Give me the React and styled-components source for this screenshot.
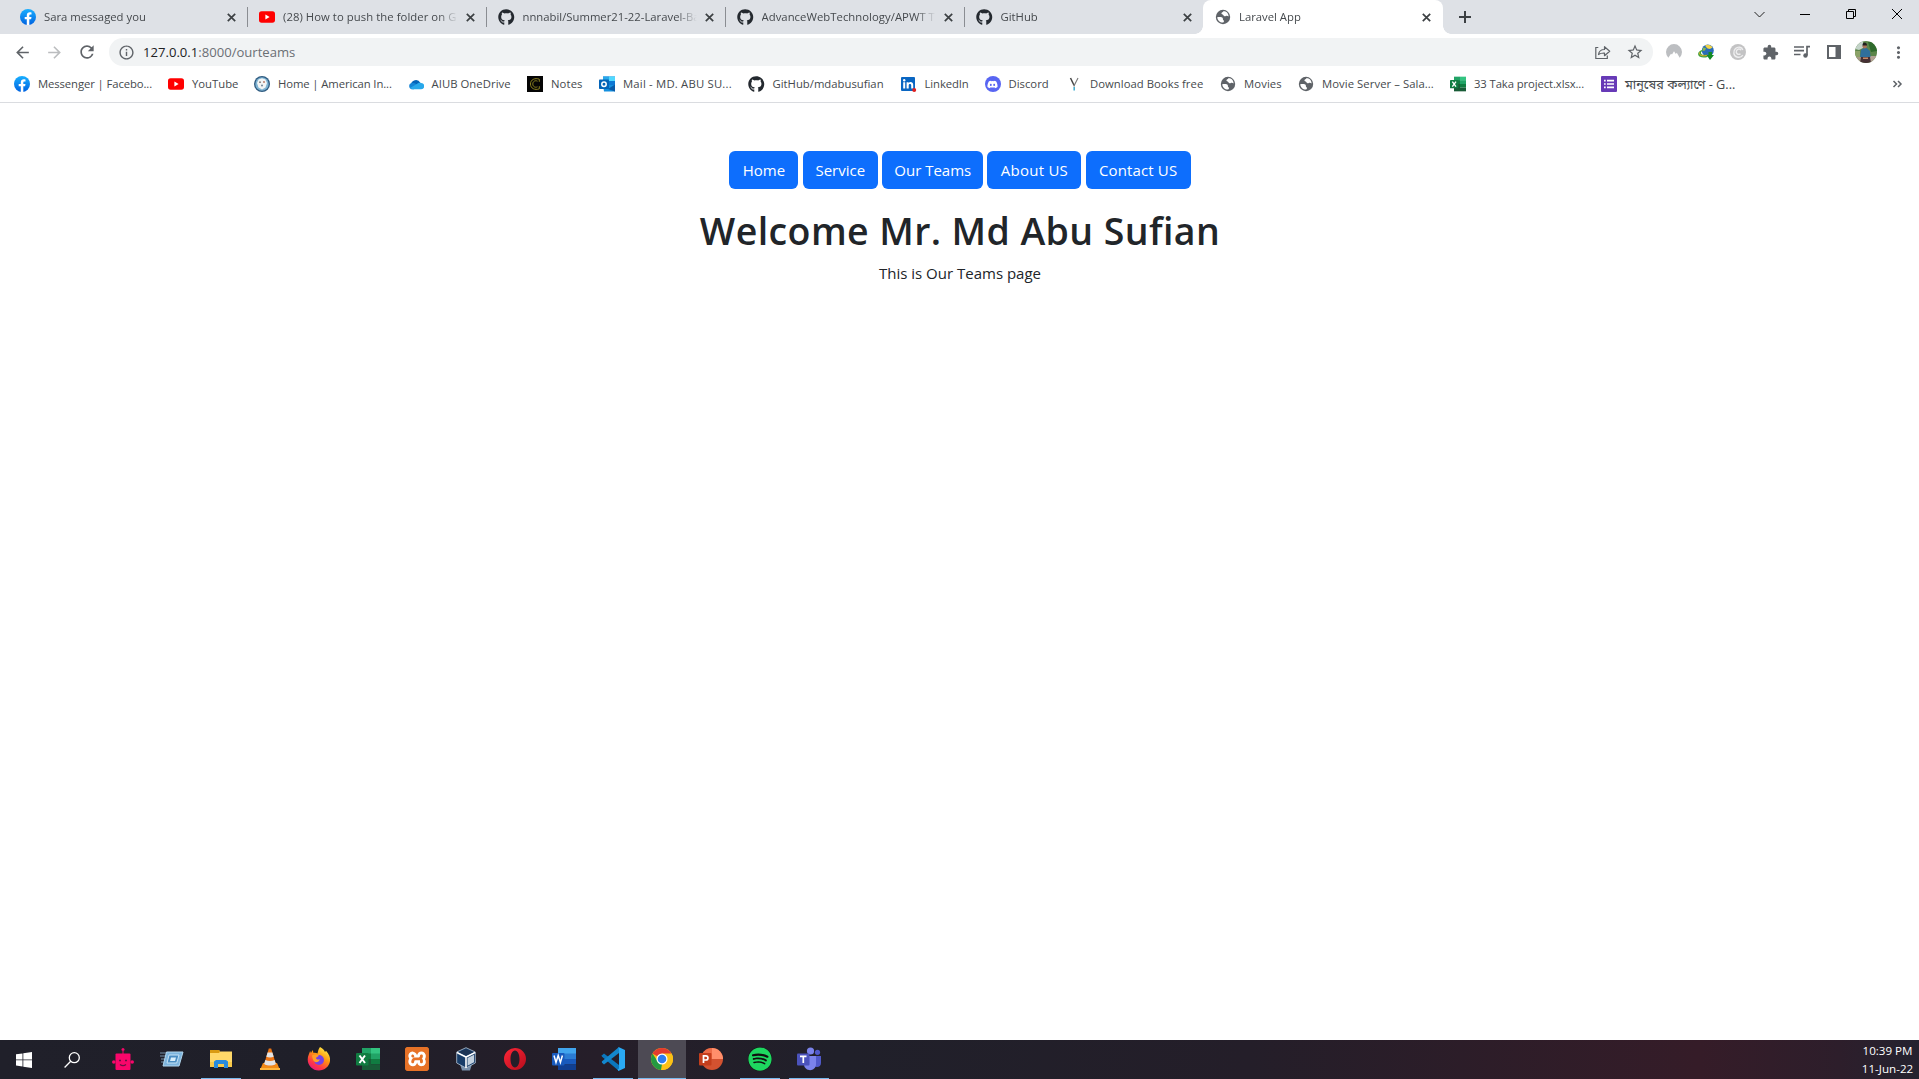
import React from "react";
import styled, { createGlobalStyle, css } from "styled-components";
import { FaGithub, FaSpotify, FaDiscord } from "react-icons/fa";
import { SiXampp } from "react-icons/si";
import { MdArrowBack, MdArrowForward, MdRefresh, MdInfoOutline, MdStarBorder, MdExtension, MdMoreVert } from "react-icons/md";

const GlobalStyle = createGlobalStyle`
  * { box-sizing: border-box; }
  html, body { margin: 0; height: 100%; overflow: hidden; background: #fff; }
  body { font-family: "Open Sans", "Noto Sans", "Noto Sans Bengali", sans-serif; }
  svg { display: block; flex: none; }
`;

const Screen = styled.div`
  display: flex;
  flex-direction: column;
  width: 1919px;
  height: 1079px;
  background: #fff;
`;

/* ---------- tab strip ---------- */
const TabStrip = styled.div`
  display: flex;
  height: 34px;
  padding-left: 8px;
  background: #dee1e6;
`;

const Tab = styled.div`
  position: relative;
  display: flex;
  align-items: center;
  flex: none;
  width: 239px;
  height: 34px;
  padding: 0 7.5px 0 12px;
  color: #45494d;
  ${(p) =>
    p.$active &&
    css`
      width: 240px;
      padding-right: 8.5px;
      background: #fff;
      border-radius: 8px 8px 0 0;
      &::before,
      &::after {
        content: "";
        position: absolute;
        bottom: 0;
        width: 8px;
        height: 8px;
      }
      &::before {
        left: -8px;
        background: radial-gradient(circle at 0 0, transparent 7.5px, #fff 8px);
      }
      &::after {
        right: -8px;
        background: radial-gradient(circle at 100% 0, transparent 7.5px, #fff 8px);
      }
    `}
  ${(p) =>
    p.$divider &&
    css`
      &::after {
        content: "";
        position: absolute;
        top: 7px;
        right: -1px;
        width: 1px;
        height: 20px;
        background: #8a8d92;
      }
    `}
`;

const TabTitle = styled.div`
  flex: 1;
  min-width: 0;
  margin: 0 5px 0 8px;
  white-space: nowrap;
  font-size: 11.3px;
  line-height: 18px;
  letter-spacing: ${(p) => p.$track || 0}px;
  mask-image: linear-gradient(to right, #000 calc(100% - 20px), transparent);
`;

const TabClose = styled.div`
  display: flex;
  justify-content: center;
  width: 16px;
`;

const NewTab = styled.div`
  display: flex;
  align-items: center;
  margin-left: 16px;
`;

const WindowControls = styled.div`
  display: flex;
  margin: 0 -1px 0 auto;
  height: 28px;
`;

const WindowButton = styled.div`
  display: flex;
  align-items: center;
  justify-content: center;
  width: 46px;
`;

/* ---------- toolbar ---------- */
const Toolbar = styled.div`
  display: flex;
  align-items: center;
  height: 36px;
  padding: 0 5px 0 12.5px;
  color: #5f6368;
`;

const NavButton = styled.div`
  display: flex;
  flex: none;
  width: 32px;
  color: ${(p) => (p.$disabled ? "#bbbdbf" : "#5f6368")};
`;

const Omnibox = styled.div`
  display: flex;
  align-items: center;
  flex: none;
  width: 1544px;
  height: 28px;
  padding: 0 9px;
  border-radius: 14px;
  background: #f1f3f4;
`;

const Address = styled.div`
  flex: 1;
  margin-left: 8.5px;
  font-size: 13.1px;
  line-height: 20px;
  color: #6b6f74;
  b {
    font-weight: 400;
    color: #202124;
  }
`;

const OmniActions = styled.div`
  display: flex;
  align-items: center;
  gap: 15px;
`;

const Extensions = styled.div`
  display: flex;
  flex: none;
  align-items: center;
  margin-left: 5.5px;
`;

const ExtensionSlot = styled.div`
  display: flex;
  justify-content: center;
  width: 32px;
`;

/* ---------- bookmarks ---------- */
const BookmarkBar = styled.div`
  display: flex;
  align-items: center;
  height: 33px;
  padding: 0 14px 4px;
  border-bottom: 1px solid #dadce0;
`;

const Bookmark = styled.div`
  display: flex;
  align-items: center;
  flex: none;
  gap: 8px;
  width: ${(p) => p.$width}px;
  white-space: nowrap;
  font-size: ${(p) => p.$size || 11.3}px;
  line-height: 18px;
  letter-spacing: ${(p) => p.$track || 0}px;
  color: #45494d;
`;

const Overflow = styled.div`
  margin-left: auto;
`;

/* ---------- page ---------- */
const Page = styled.main`
  display: flex;
  flex: 1;
  flex-direction: column;
  align-items: center;
  padding: 48px 0 0 1px;
  color: #212529;
`;

const ButtonRow = styled.nav`
  display: flex;
  gap: 4.2px;
`;

const PageButton = styled.a`
  display: flex;
  align-items: center;
  justify-content: center;
  width: ${(p) => p.$width}px;
  height: 38px;
  border-radius: 6px;
  background: #0d6efd;
  color: #fff;
  font-size: 15px;
  line-height: 24px;
  letter-spacing: ${(p) => p.$track || 0}px;
  white-space: nowrap;
`;

const Heading = styled.h1`
  margin: 18px 0 6px;
  font-size: 37.5px;
  font-weight: 600;
  line-height: 48px;
  letter-spacing: 0.4px;
  white-space: nowrap;
`;

const Lead = styled.p`
  margin: 0;
  font-size: 15px;
  line-height: 24px;
`;

/* ---------- taskbar ---------- */
const Taskbar = styled.footer`
  display: flex;
  height: 39px;
  background: linear-gradient(90deg, #20202a 0, #1f1f29 320px, #261e29 600px, #20202a 840px, #241e29 1250px, #351c28 1700px, #2d1e2b 1840px, #24222f 1919px);
`;

const TaskItem = styled.div`
  display: flex;
  align-items: center;
  justify-content: center;
  width: ${(p) => (p.$active ? 48 : 40)}px;
  margin-right: ${(p) => (p.$active ? 5 : 9)}px;
  margin-left: ${(p) => (p.$active ? -4 : 0)}px;
  height: 39px;
  background: ${(p) => (p.$active ? "#4d4a54" : "transparent")};
  border-bottom: 1px solid ${(p) => (p.$open ? "#76b9ed" : "transparent")};
`;

const StartArea = styled.div`
  display: flex;
  align-items: center;
  gap: 32px;
  width: 103px;
  padding-left: 16px;
`;

const Clock = styled.div`
  display: flex;
  flex-direction: column;
  align-items: center;
  width: 63px;
  margin-left: auto;
  padding-top: 2px;
  color: #fff;
  font-size: 11.6px;
  line-height: 18px;
  white-space: nowrap;
`;

/* ---------- drawn icons ---------- */
const Svg = ({ s = 16, w, h, vb = "0 0 16 16", children }) => (
  <svg width={w || s} height={h || s} viewBox={vb} fill="none">{children}</svg>
);

const Facebook = () => (
  <Svg>
    <defs><linearGradient id="fb" x1="0" y1="0" x2="0" y2="1"><stop stopColor="#19afff" /><stop offset="1" stopColor="#0062e0" /></linearGradient></defs>
    <circle cx="8" cy="8" r="8" fill="url(#fb)" />
    <path d="M11.1 10.3 11.5 8H9.3V6.5c0-.7.3-1.1 1.2-1.1h1V3.4c-.5-.1-1-.1-1.7-.1C8 3.3 6.8 4.3 6.8 6.2V8H4.7v2.3h2.1v5.6c.8.1 1.7.1 2.5 0v-5.6z" fill="#fff" />
  </Svg>
);
const Youtube = () => (
  <Svg><rect y="2.3" width="16" height="11.4" rx="2.6" fill="#f00" /><path d="M6.4 5.6v4.8L10.6 8z" fill="#fff" /></Svg>
);
const Github = () => <FaGithub size={16.5} color="#24292f" />;
const GlobeIcon = () => (
  <Svg>
    <circle cx="8" cy="8" r="7.2" fill="#5f6368" />
    <path d="M2.2 8.3c2.4-.4 4.8-.5 5.5.8.5 1-.2 1.5.8 2.1.8.5.5 1.8-.3 2.4-3.1.2-5.8-2.2-6-5.3zM8.3 2.200c-.4 1.100-1.700 1.200-1.900 2.100-.2 1.100 1.300.7 1.800 1.700.4.900 1.500 1.600 2.600 1 .9-.5 1.900-.2 2.800.5.100-2.300-1.200-4.300-3.100-5.100-.7-.2-1.500-.3-2.200-.2z" fill="#fff" />
  </Svg>
);
const Crest = () => (
  <Svg>
    <circle cx="8" cy="8" r="8" fill="#2f5b80" /><circle cx="8" cy="8" r="6.700" fill="#7fb4d3" />
    <path d="M4.500 3.500 8 2.300l3.500 1.200L13 7l-1.500 4.500L8 13.500l-3.500-2L3 7z" fill="#f3f5f5" />
    <circle cx="6" cy="6.200" r=".9" fill="#777" /><circle cx="10" cy="6" r=".9" fill="#b56f5c" /><circle cx="8" cy="9.500" r="1" fill="#738798" />
  </Svg>
);
const OneDrive = () => (
  <Svg>
    <path d="M3 9a4.900 4.900 0 0 1 9.300-2.200L9 11H3z" fill="#0364b8" />
    <path d="M3.400 7.100c2-.7 3.300.1 5.500 1.500L6 13.200H3.300a3.200 3.200 0 0 1 .1-6.100z" fill="#1484d6" />
    <path d="M8.400 8.300c1.300-1.500 3.100-2 4.800-1.300A3.100 3.100 0 0 1 13 13.200H4.500L2 12z" fill="#28a8ea" />
  </Svg>
);
const NotesIcon = () => (
  <Svg><path d="M0 0h16v16H0z" fill="#050505" /><path d="M12.300 5.800V3.200C8 1.600 3.500 3.500 3.500 8s4.400 6.500 8.800 4.800v-2.600M10.500 5.200C8 4 5.800 5.500 5.800 8s2.200 4 4.700 2.800" stroke="#8e8421" strokeWidth="1" /></Svg>
);
const Outlook = () => (
  <Svg>
    <path d="M4 .5h12v10H4z" fill="#0f78d4" /><path d="M10 .5h6V5h-6z" fill="#50d9ff" /><path d="M4 .5h6V5H4z" fill="#28a8ea" />
    <path d="M4 9h12v6.500H5z" fill="#1490df" /><path d="m16 8.500-7 4.500 7 2.500z" fill="#0a5aa8" />
    <rect y="3.500" width="10" height="9.500" rx=".8" fill="#0364b8" /><circle cx="5" cy="8.200" r="2.200" stroke="#fff" strokeWidth="1.500" />
  </Svg>
);
const Linkedin = () => (
  <Svg><rect x="0" y="1" width="14" height="14" rx="1" fill="#0a66c2" /><circle cx="3.200" cy="4.200" r="1.200" fill="#fff" /><path d="M2.200 6.200h2v6.300h-2zM5.600 6.200h2v.9c1.300-1.700 4.600-1.300 4.600 1.700v3.700h-2V9.200c0-1.700-2.500-1.800-2.500 0v3.300H5.600z" fill="#fff" /><circle cx="13.200" cy="14" r="2" fill="#e02020" /></Svg>
);
const DiscordDisc = styled.div`
  display: grid;
  place-items: center;
  flex: none;
  width: 16px;
  height: 16px;
  border-radius: 50%;
  background: #5865f2;
  color: #fff;
`;
const Discord = () => <DiscordDisc><FaDiscord size={11} /></DiscordDisc>;
const BookV = () => (
  <Svg><path d="M4.500 2 8 9.300" stroke="#454545" strokeWidth="1.500" /><path d="M12 2 8.300 9.300" stroke="#777" strokeWidth="1.100" /><path d="M8.200 8.500v2" stroke="#777" strokeWidth="1.400" /><path d="M8.200 11v3.500" stroke="#48afd0" strokeWidth="1.600" /></Svg>
);
const Excel = ({ s = 16 }) => (
  <Svg s={s} vb="0 0 24 24">
    <path d="M6 1h9v11H6z" fill="#21a366" /><path d="M15 1h9v6h-9z" fill="#33c481" /><path d="M6 6.500h9V12H6z" fill="#107c41" /><path d="M15 6.500h9V12h-9z" fill="#21a366" /><path d="M6 12h9v11H6z" fill="#185c37" /><path d="M15 12h9v5.500h-9z" fill="#107c41" /><path d="M15 17.500h9V23h-9z" fill="#185c37" />
    <rect y="6" width="12.500" height="12.500" rx="1" fill="#107c41" /><path d="m3.500 8.500 5.500 7.500M9 8.500 3.500 16" stroke="#fff" strokeWidth="2" />
  </Svg>
);
const Forms = () => (
  <Svg><rect width="16" height="16" rx="1" fill="#673ab7" /><path d="M6 4.700h7M6 8h7M6 11.300h7M3 4.700h1.700M3 8h1.700M3 11.300h1.700" stroke="#fff" strokeWidth="1.700" /></Svg>
);
const Cross = () => <Svg s={9} vb="0 0 9 9"><path d="m.8.8 7.400 7.400M8.200.8.8 8.200" stroke="#3c4043" strokeWidth="1.700" /></Svg>;
const Plus = () => <Svg s={12} vb="0 0 12 12"><path d="M6 0v12M0 6h12" stroke="#3c4043" strokeWidth="2" /></Svg>;
const Share = () => (
  <Svg><path d="M3.300 3.500H.8v11h11.500v-3" stroke="#5f6368" strokeWidth="1.200" /><path d="M3.500 10.500c.5-3.300 2.500-5 6-5V2.700l5.200 4.600-5.200 4.400V9c-2.700-.1-4.300.3-6 1.500z" stroke="#5f6368" strokeWidth="1.200" strokeLinejoin="round" /></Svg>
);
const Nord = () => <Svg><path d="M2.300 13.700A8 8 0 1 1 13.700 13.700L10.800 8.800l-1 1.300L8 7.200l-2 3.200-1-.7z" fill="#bcbec1" /></Svg>;
const Idm = () => (
  <Svg>
    <circle cx="9.800" cy="6.500" r="6" fill="#2a6cb8" />
    <path d="M7 1.500C9 .3 13 .6 14.500 3.500L12 5 9.500 4.500 8 3z" fill="#efd24a" />
    <path d="M5 3.500 8 4 7 6.500 4.500 7z" fill="#8bbb4a" />
    <path d="M4 6C-.5 7.500-1 11 2 12.800c2 1.100 5 1 7.500.2L9 10.500c-3 .8-6 .3-6-1.500 0-1 .7-1.800 1.500-2.300z" fill="#3da33c" />
    <path d="M1.500 8.500c-.5 3.500 4 4 8 2.700" stroke="#f0a828" strokeWidth="1" />
    <path d="M10.500 8h3.500v3h2l-4 5-3.500-5h2z" fill="#138b25" />
  </Svg>
);
const Swirl = () => <Svg><circle cx="8" cy="8" r="8" fill="#c3c3c4" /><path d="M12.800 6C12 2.700 8 2.300 5.500 4.500 2.800 7 3.300 12 7 13c2.700.8 5-.5 5.800-2M11 6.300c-1-2-3.800-1.500-4.600.6-.8 2.500 1.600 4.300 4.100 3" stroke="#eeeeef" strokeWidth="1.400" /></Svg>;
const MediaQueue = () => <Svg><path d="M0 3h10M0 6.700h10M0 10.500h6.500M16 2.700h-3v8.500" stroke="#5f6368" strokeWidth="1.700" /><circle cx="11.500" cy="11.500" r="2.200" fill="#5f6368" /></Svg>;
const SidePanel = () => <Svg s={14} vb="0 0 14 14"><path d="M1 1h12v12H1z" stroke="#5f6368" strokeWidth="2" /><path d="M8.500 1H13v12H8.500z" fill="#5f6368" /></Svg>;
const Avatar = () => (
  <Svg s={22} vb="0 0 22 22">
    <defs><clipPath id="av"><circle cx="11" cy="11" r="11" /></clipPath></defs>
    <g clipPath="url(#av)">
      <path d="M0 0h22v22H0z" fill="#5c8549" /><path d="M0 0h8v7L4 9 0 8z" fill="#c3d3c8" /><path d="M13 1h9v9l-6 1z" fill="#2f6a2c" />
      <path d="M0 10h5v6H0z" fill="#8ca268" /><path d="M15 15h7v7h-7z" fill="#b3a294" /><path d="M0 16h6v6H0z" fill="#a79a86" />
      <path d="m6 9 3-2h2.500l3.500 3 .500 6H5z" fill="#2f6f9b" /><path d="M6 16h9l1 6H5z" fill="#463034" />
      <circle cx="9.700" cy="5.300" r="2.200" fill="#a87459" /><path d="M7.400 4.500c0-4 4.600-4 4.600 0z" fill="#211e1d" /><path d="M8 16.500h5V18H8z" fill="#c78a66" />
    </g>
  </Svg>
);

const Windows = () => <Svg><path d="M0 2.300 6.500 1.400v6.100H0zM7.300 1.300 16 0v7.500H7.300zM0 8.300h6.500v6.200L0 13.600zM7.300 8.300H16V16l-8.700-1.300z" fill="#fff" /></Svg>;
const Search = () => <Svg><circle cx="10.300" cy="5.700" r="5" stroke="#fff" strokeWidth="1.300" /><path d="M6.700 9.300.6 15.500" stroke="#fff" strokeWidth="1.300" /></Svg>;
const Robot = () => (
  <Svg s={22} vb="0 0 22 22"><circle cx="11" cy="1.500" r="1.500" fill="#f8066a" /><path d="M11 2v4" stroke="#c40c5c" strokeWidth="1.300" /><rect x="3.500" y="5.500" width="15" height="16.500" rx="1" fill="#f8066a" /><circle cx="1.800" cy="14" r="1.800" fill="#f8066a" /><circle cx="20.200" cy="14" r="1.800" fill="#f8066a" /><path d="M7 12.500h2M13 12.500h2M8 16.500c2 1.500 4 1.500 6 0" stroke="#691044" strokeWidth="1.300" /></Svg>
);
const RunApp = () => (
  <Svg w={24} h={16} vb="0 0 24 16"><path d="M0 2h7M0 5h6M1 8h5M1 11h4" stroke="#7f9eb7" strokeWidth=".9" /><path d="M6.500 1H23l-4 14H3z" fill="#7db4dd" stroke="#b2d7ef" /><path d="M9 4h10l-2.300 8H7z" fill="#4a8dc2" stroke="#c5e2f5" /><path d="M11 6.500h5l-1 3.500h-5z" fill="#d9eefa" /></Svg>
);
const Folder = () => (
  <Svg w={22} h={18} vb="0 0 22 18"><path d="M0 0h9l1 1.500h12V17H0z" fill="#ffd869" /><path d="M0 0h9l1 1.500L9 3H0z" fill="#d99b12" /><path d="M0 12h22v5H0z" fill="#f8c94a" /><path d="M4 18v-6.500L6 10h10l2 1.500V18h-4v-4H8v4z" fill="#2a8bdc" /></Svg>
);
const Cone = () => (
  <Svg w={20} h={22} vb="0 0 20 22"><path d="M3 15h14l3 7H0z" fill="#f38b16" /><path d="M0 20h20v2H0z" fill="#ffb63d" /><path d="M8.800.5h2.400L16 16.500c-3 2-9 2-12 0z" fill="#ec7414" /><path d="M7.600 4.500h4.800l1.300 4.300c-2 1-5.300 1-7.400 0zM5.300 12c3 1.200 6.400 1.200 9.400 0l1.200 4c-3 2-8.800 2-11.800 0z" fill="#e3e4e5" /></Svg>
);
const Firefox = () => (
  <Svg s={24} vb="0 0 24 24">
    <defs><linearGradient id="ff" x1=".8" y1="0" x2=".2" y2="1"><stop stopColor="#fff44f" /><stop offset=".4" stopColor="#ff980e" /><stop offset=".75" stopColor="#ff3647" /><stop offset="1" stopColor="#e31587" /></linearGradient></defs>
    <path d="M13 0c3 1.500 4.500 3.500 5 5l1-1.200c3 3 4.500 6.800 4 10.200-.7 5.500-5.500 9.500-11.200 9.500C5.500 23.500.7 18.500.7 12.500c0-3.400 1.600-6 2.400-8.500L4 6l1.700-3 .8 3c1.500-.4 3 0 4 .5C11 4 11.500 2 13 0z" fill="url(#ff)" />
    <circle cx="12" cy="13" r="5" fill="#7542e5" /><path d="M5 8.500c2-1.500 5-1.500 7 .2l-3 2c-.3 1.300 2 2.600 4 1.500-1 2.800-4 4-6 2-1-1-1.800-3.400-2-5.700z" fill="#ff9f28" />
  </Svg>
);
const XamppTile = styled.div`
  display: grid;
  place-items: center;
  width: 24px;
  height: 24px;
  border-radius: 4px;
  background: radial-gradient(#fff 58%, #e77227 60%);
  color: #e77227;
`;
const Xampp = () => <XamppTile><SiXampp size={24} /></XamppTile>;
const VBox = () => (
  <Svg w={20} h={24} vb="0 0 20 24"><path d="m4 17 6-1 6 1-2 6.500H6z" fill="#7890ab" /><path d="M10 .7 19.300 5v11L10 21 .7 16V5z" fill="#173c68" stroke="#b5c5d5" strokeWidth=".8" /><path d="M1 5.500 10 10l9-4.500M10 9.500V21" stroke="#fff" strokeWidth="1.600" /><path d="M10 2 17 5.200 10 8.500 3 5.200z" fill="#1b3455" /><path d="M11.500 11 18 7.800v7.500l-6.500 3.500z" fill="#c3d1de" /></Svg>
);
const OperaIcon = () => (
  <Svg s={22} vb="0 0 22 22">
    <defs><linearGradient id="op" x1="0" y1="0" x2="1" y2="1"><stop stopColor="#ff2637" /><stop offset="1" stopColor="#b50d1c" /></linearGradient></defs>
    <path fillRule="evenodd" d="M11 0a11 11 0 1 0 0 22 11 11 0 0 0 0-22zm0 2.500c2.700 0 4.500 3.600 4.500 8.500s-1.800 8.500-4.500 8.500S6.500 15.900 6.500 11 8.300 2.500 11 2.500z" fill="url(#op)" />
  </Svg>
);
const Word = () => (
  <Svg s={24} vb="0 0 24 24"><path d="M6 1h18v6H6z" fill="#41a5ee" /><path d="M6 6.500h18V12H6z" fill="#2b7cd3" /><path d="M6 12h18v5.500H6z" fill="#185abd" /><path d="M6 17.500h18V23H6z" fill="#103f91" /><rect y="6" width="12.500" height="12.500" rx="1" fill="#185abd" /><path d="m2 8.500 2 7 2.200-7 2.200 7 2-7" stroke="#fff" strokeWidth="1.500" /></Svg>
);
const VSCode = () => (
  <Svg s={24} vb="0 0 24 24"><path d="m1 8.200 2-1.700L18 18v6L.8 9.500z" fill="#0b77bd" /><path d="m1 15.800 2 1.700L18 6V0L.8 14.500z" fill="#1387cd" /><path d="m17.500 0 6.500 3v18l-6.500 3-1-1.500 1.500-1v-19z" fill="#2aa9f3" /></Svg>
);
const Chrome = () => (
  <Svg s={22} vb="0 0 22 22"><circle cx="11" cy="11" r="11" fill="#fbc116" /><path d="M11 11 1.500 5.500a11 11 0 0 1 19 0z" fill="#e33b2e" /><path d="M1.500 5.500 6.700 13.500 11 16l-1 6A11 11 0 0 1 1.500 5.500z" fill="#249a41" /><path d="M11 5.500h9.500A11 11 0 0 1 10.300 22l5-8.500z" fill="#fbc116" /><circle cx="11" cy="11" r="5.500" fill="#fff" /><circle cx="11" cy="11" r="4.300" fill="#2d7df0" /></Svg>
);
const PowerPoint = () => (
  <Svg s={24} vb="0 0 24 24"><circle cx="13" cy="12" r="11" fill="#d35230" /><path d="M13 1v11h11A11 11 0 0 0 13 1z" fill="#ff8f6b" /><path d="M2 12A11 11 0 0 1 13 1v11z" fill="#ed6c47" /><rect y="6" width="12.500" height="12.500" rx="1" fill="#c43e1c" /><path d="M4.500 16V8.800h2.200c3 0 3 4.200 0 4.200H4.500" stroke="#fff" strokeWidth="1.700" /></Svg>
);
const SpotifyDisc = styled.div`
  border-radius: 50%;
  background: #101010;
  color: #1ed760;
`;
const Spotify = () => <SpotifyDisc><FaSpotify size={24} /></SpotifyDisc>;
const Teams = () => (
  <Svg s={24} vb="0 0 24 24"><circle cx="13.500" cy="4" r="3.600" fill="#7b83eb" /><circle cx="20.500" cy="5.300" r="2.600" fill="#5059c9" /><path d="M16 9h8v7c0 4-4 5-7 3z" fill="#5059c9" /><path d="M8 9h11v8c0 8-11 8-12 1z" fill="#7b83eb" /><rect y="6.500" width="12.500" height="12" rx="1" fill="#4b53bc" /><path d="M3 9.300h6.500M6.300 9.300V16" stroke="#fff" strokeWidth="1.700" /></Svg>
);

const tabs = [
  { icon: <Facebook />, title: "Sara messaged you", divider: true },
  { icon: <Youtube />, title: "(28) How to push the folder on G", divider: true, track: 0.06 },
  { icon: <Github />, title: "nnnabil/Summer21-22-Laravel-Ba", divider: true },
  { icon: <Github />, title: "AdvanceWebTechnology/APWT T", divider: true, track: 0.04 },
  { icon: <Github />, title: "GitHub" },
  { icon: <GlobeIcon />, title: "Laravel App", active: true },
];

const bookmarks = [
  { icon: <Facebook />, label: "Messenger | Facebo...", width: 154, track: -0.1 },
  { icon: <Youtube />, label: "YouTube", width: 86 },
  { icon: <Crest />, label: "Home | American In...", width: 153.5, track: -0.1 },
  { icon: <OneDrive />, label: "AIUB OneDrive", width: 119.5, track: 0.05 },
  { icon: <NotesIcon />, label: "Notes", width: 72, track: 0.1 },
  { icon: <Outlook />, label: "Mail - MD. ABU SU...", width: 149, track: 0.2 },
  { icon: <Github />, label: "GitHub/mdabusufian", width: 152.500 },
  { icon: <Linkedin />, label: "LinkedIn", width: 84, track: -0.1 },
  { icon: <Discord />, label: "Discord", width: 81.5 },
  { icon: <BookV />, label: "Download Books free", width: 154, track: 0.03 },
  { icon: <GlobeIcon />, label: "Movies", width: 78, track: 0.1 },
  { icon: <GlobeIcon />, label: "Movie Server – Sala...", width: 152, track: 0.06 },
  { icon: <Excel />, label: "33 Taka project.xlsx...", width: 151, track: -0.1 },
  { icon: <Forms />, label: "মানুষের কল্যাণে - G...", width: 140, size: 12.7 },
];

const links = [
  { label: "Home", width: 69 },
  { label: "Service", width: 75.5 },
  { label: "Our Teams", width: 101 },
  { label: "About US", width: 94, track: 0.25 },
  { label: "Contact US", width: 105, track: 0.15 },
];

const apps = [
  { icon: <Robot /> },
  { icon: <RunApp /> },
  { icon: <Folder />, open: true },
  { icon: <Cone /> },
  { icon: <Firefox /> },
  { icon: <Excel s={24} /> },
  { icon: <Xampp /> },
  { icon: <VBox /> },
  { icon: <OperaIcon /> },
  { icon: <Word /> },
  { icon: <VSCode />, open: true },
  { icon: <Chrome />, open: true, active: true },
  { icon: <PowerPoint /> },
  { icon: <Spotify />, open: true },
  { icon: <Teams />, open: true },
];

export default function App() {
  return (
    <Screen>
      <GlobalStyle />
      <TabStrip>
        {tabs.map((t) => (
          <Tab key={t.title} $active={t.active} $divider={t.divider}>
            {t.icon}
            <TabTitle $track={t.track}>{t.title}</TabTitle>
            <TabClose><Cross /></TabClose>
          </Tab>
        ))}
        <NewTab><Plus /></NewTab>
        <WindowControls>
          <WindowButton><Svg s={11} vb="0 0 11 11"><path d="m.5 3 5 5 5-5" stroke="#222" /></Svg></WindowButton>
          <WindowButton><Svg s={10} vb="0 0 10 10"><path d="M0 5.500h10" stroke="#000" /></Svg></WindowButton>
          <WindowButton><Svg s={10} vb="0 0 10 10"><path d="M.5 2.500h7v7h-7zM2.500 2.500v-2h7v7h-2" stroke="#000" /></Svg></WindowButton>
          <WindowButton><Svg s={10} vb="0 0 10 10"><path d="m0 0 10 10M10 0 0 10" stroke="#000" /></Svg></WindowButton>
        </WindowControls>
      </TabStrip>

      <Toolbar>
        <NavButton><MdArrowBack size={19} /></NavButton>
        <NavButton $disabled><MdArrowForward size={19} /></NavButton>
        <NavButton><MdRefresh size={20} /></NavButton>
        <Omnibox>
          <MdInfoOutline size={17} />
          <Address><b>127.0.0.1</b>:8000/ourteams</Address>
          <OmniActions><Share /><MdStarBorder size={18} /></OmniActions>
        </Omnibox>
        <Extensions>
          <ExtensionSlot><Nord /></ExtensionSlot>
          <ExtensionSlot><Idm /></ExtensionSlot>
          <ExtensionSlot><Swirl /></ExtensionSlot>
          <ExtensionSlot><MdExtension size={17} /></ExtensionSlot>
          <ExtensionSlot><MediaQueue /></ExtensionSlot>
          <ExtensionSlot><SidePanel /></ExtensionSlot>
          <ExtensionSlot><Avatar /></ExtensionSlot>
          <ExtensionSlot><MdMoreVert size={19} /></ExtensionSlot>
        </Extensions>
      </Toolbar>

      <BookmarkBar>
        {bookmarks.map((b) => (
          <Bookmark key={b.label} $width={b.width} $track={b.track} $size={b.size}>
            {b.icon}
            <span>{b.label}</span>
          </Bookmark>
        ))}
        <Overflow><Svg w={16} h={8} vb="0 0 16 8"><path d="m4.500 1 3 3-3 3M9 1l3 3-3 3" stroke="#5f6368" strokeWidth="1.500" /></Svg></Overflow>
      </BookmarkBar>

      <Page>
        <ButtonRow>
          {links.map((l) => (
            <PageButton key={l.label} $width={l.width} $track={l.track}>{l.label}</PageButton>
          ))}
        </ButtonRow>
        <Heading>Welcome Mr. Md Abu Sufian</Heading>
        <Lead>This is Our Teams page</Lead>
      </Page>

      <Taskbar>
        <StartArea><Windows /><Search /></StartArea>
        {apps.map((a, i) => (
          <TaskItem key={i} $open={a.open} $active={a.active}>{a.icon}</TaskItem>
        ))}
        <Clock>
          <span>10:39 PM</span>
          <span>11-Jun-22</span>
        </Clock>
      </Taskbar>
    </Screen>
  );
}
